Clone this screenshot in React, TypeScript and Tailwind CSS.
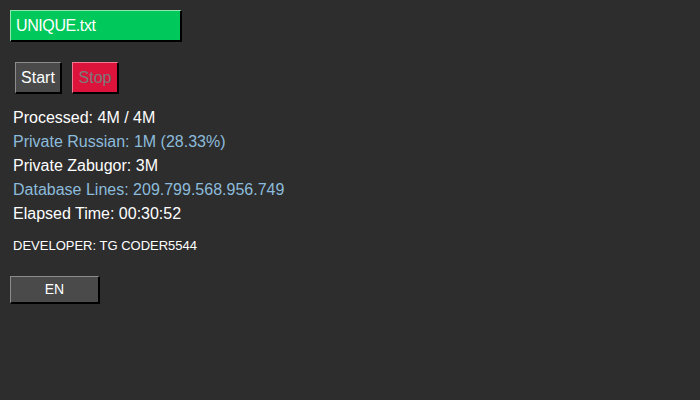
import React from 'react';

const stats = [
  { label: 'Processed: 4M / 4M', tone: 'text-white' },
  { label: 'Private Russian: 1M (28.33%)', tone: 'text-[#8cbbdb]' },
  { label: 'Private Zabugor: 3M', tone: 'text-white' },
  { label: 'Database Lines: 209.799.568.956.749', tone: 'text-[#8cbbdb]' },
  { label: 'Elapsed Time: 00:30:52', tone: 'text-white' }
];

export default function App() {
  return (
    <div className="min-h-[400px] w-[700px] bg-[#2d2d2d] pl-[10px] pt-[10px] font-['Liberation_Sans',Arial,sans-serif]">
      {/* File field */}
      <div className="flex h-[32px] w-[172px] items-center border-t border-l border-t-[#8fe8b0] border-l-[#8fe8b0] border-b-2 border-r-2 border-b-black border-r-black bg-[#00c85a] pl-[5px] text-[16px] tracking-[-0.4px] text-white">
        UNIQUE.txt
      </div>

      {/* Controls */}
      <div className="mt-[20px] flex gap-[10px] pl-[5px]">
        <button className="h-[32px] w-[47px] border-t border-l border-t-[#8c8c8c] border-l-[#8c8c8c] border-b-2 border-r-2 border-b-black border-r-black bg-[#4a4a4a] text-[16px] text-white">
          Start
        </button>
        <button className="h-[32px] w-[47px] border-t border-l border-t-[#f07a92] border-l-[#f07a92] border-b-2 border-r-2 border-b-black border-r-black bg-[#dc143c] text-[16px] text-[#7a7a7a]">
          Stop
        </button>
      </div>

      {/* Stats */}
      <div className="mt-[12px] pl-[3px]">
        {stats.map((s) => (
          <div key={s.label} className={`text-[16px] leading-[24px] ${s.tone}`}>
            {s.label}
          </div>
        ))}
      </div>

      <div className="mt-[10px] pl-[3px] text-[13px] text-white">
        DEVELOPER: TG CODER5544
      </div>

      <button className="mt-[20px] h-[28px] w-[90px] border-t border-l border-t-[#8c8c8c] border-l-[#8c8c8c] border-b-2 border-r-2 border-b-black border-r-black bg-[#4a4a4a] text-[14px] text-white">
        EN
      </button>
    </div>
  );
}
